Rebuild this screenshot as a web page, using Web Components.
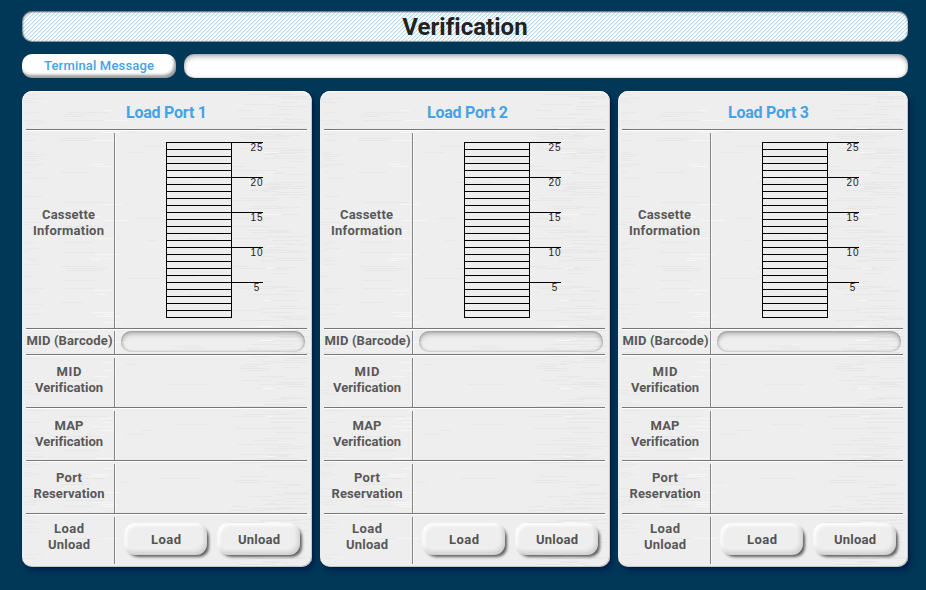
<!DOCTYPE html>
<html lang="en"><head><meta charset="utf-8"><title>Verification</title>
<style>html,body{margin:0;height:100%}body{background:#013757;overflow:hidden;font-family:Roboto,"Liberation Sans",Arial,sans-serif}</style></head>
<body><verification-screen></verification-screen>
<script>
// A line of text whose tracking is adjusted to a given width.
class FitText extends HTMLElement{
  connectedCallback(){
    if(this.shadowRoot)return;
    const r=this.attachShadow({mode:'open'});
    r.innerHTML='<style>:host{display:block;white-space:nowrap;text-align:center}span{display:inline-block}</style><span></span>';
    const s=r.querySelector('span'),t=this.getAttribute('text');s.textContent=t;
    const w=+this.getAttribute('width');
    if(w&&t.length>1){const d=(w-s.getBoundingClientRect().width)/(t.length-1);s.style.letterSpacing=d+'px';s.style.marginRight=-d+'px';}
  }
}
customElements.define('fit-text',FitText);

class BrushedMetal extends HTMLElement{
  connectedCallback(){
    const r=this.attachShadow({mode:'open'});
    let seed=7;const rnd=()=>(seed=(seed*16807)%2147483647)/2147483647;
    let out='';
    const streak=(x,y,w,c,o)=>out+=`<rect x="${x|0}" y="${y|0}" width="${Math.max(1,w|0)}" height="1" fill="${c}" opacity="${o}"/>`;
    for(let y=3;y<474;y+=2){
      if(rnd()<.4)streak(1+rnd()*5,y,6+rnd()*16,'#dcdcdc',.35);
      if(rnd()<.16)streak(38+rnd()*8,y,20+rnd()*26,'#dedede',.45);
      if(rnd()<.16)streak(68+rnd()*16,y,8+rnd()*18,'#fff',.45);
      if(rnd()<.6){const x=205+rnd()*60;streak(x,y,Math.min(287-x,14+rnd()*45),'#dedede',.45);}
      if(rnd()<.3)streak(240+rnd()*30,y+1,8+rnd()*18,'#dcdcdc',.35);
      if(rnd()<.1)streak(95+rnd()*75,y,8+rnd()*32,'#e0e0e0',.45);
      if(rnd()<.05)streak(235+rnd()*10,y,8+rnd()*10,'#fff',.6);
    }
    r.innerHTML=`<style>:host{display:block}svg{display:block}</style><svg width="290" height="476" shape-rendering="crispEdges">${out}</svg>`;
  }
}
customElements.define('brushed-metal',BrushedMetal);

class CassetteMap extends HTMLElement{
  connectedCallback(){
    const r=this.attachShadow({mode:'open'});
    r.innerHTML=`<style>
    :host{display:flex;color:#222;font:10px "Liberation Sans",Arial,sans-serif}
    .slots{box-sizing:border-box;width:66px;height:176px;border:1px solid #000;border-top:0;background:repeating-linear-gradient(#000 0 1px,transparent 1px 7px)}
    .scale{width:31px}
    .tick{box-sizing:border-box;height:35px;border-top:1px solid #000;padding:0 0 0 18px;line-height:9px}
    </style><div class="slots"></div><div class="scale">${[25,20,15,10,5].map(n=>`<div class="tick"><fit-text text="${n}" width="12"></fit-text></div>`).join('')}</div>`;
  }
}
customElements.define('cassette-map',CassetteMap);

class InsetField extends HTMLElement{
  connectedCallback(){
    this.attachShadow({mode:'open'}).innerHTML=`<style>:host{display:block;box-sizing:border-box;border-radius:10px;box-shadow:inset 0 3px 5px #0004,inset 0 0 3px #0004}</style><slot></slot>`;
  }
}
customElements.define('inset-field',InsetField);

class PushButton extends HTMLElement{
  connectedCallback(){
    this.attachShadow({mode:'open'}).innerHTML=`<style>
    :host{display:block}
    button{display:block;width:100%;height:32px;margin:0;padding:1px 0 0;border:0;border-radius:11px;background:#eee;color:#535353;font:bold 13px Roboto,"Liberation Sans",Arial,sans-serif;
    box-shadow:3px 3px 3px -1px #0009,inset -2px -3px 4px #0002,inset 3px 3px 3px #fffc}
    fit-text{padding-left:1px}
    </style><button><fit-text text="${this.getAttribute('label')}" width="${this.getAttribute('text-width')}"></fit-text></button>`;
  }
}
customElements.define('push-button',PushButton);

class PortRow extends HTMLElement{
  connectedCallback(){
    const lines=this.getAttribute('lines').split('|').map(l=>l.split(':'));
    this.attachShadow({mode:'open'}).innerHTML=`<style>
    :host{display:grid;grid-template-columns:88px 1fr;box-sizing:border-box;border-top:1px solid #777;box-shadow:inset 0 1px #fff;padding-top:3px}
    .label{box-sizing:border-box;display:flex;flex-direction:column;justify-content:center;align-items:center;font:bold 13px/16px Roboto,"Liberation Sans",Arial,sans-serif;color:#585858;padding-right:var(--inset,2px);padding-bottom:var(--lift,0px)}
    .cell{box-sizing:border-box;border-left:1px solid #858585;box-shadow:inset 1px 0 #fff9;min-width:0}
    </style><div class="label">${lines.map(([t,w])=>`<fit-text text="${t}" width="${w}"></fit-text>`).join('')}</div><div class="cell"><slot></slot></div>`;
  }
}
customElements.define('port-row',PortRow);

class LoadPort extends HTMLElement{
  connectedCallback(){
    const n=+this.getAttribute('number');
    this.attachShadow({mode:'open'}).innerHTML=`<style>
    :host{display:grid;width:290px;height:476px;border-radius:10px;background:#eee;box-shadow:inset 0 1px #fff,inset -1px -1px #8886,3px 4px 5px #00204dcc,1px 1px 2px #0008}
    brushed-metal,.content{grid-area:1/1}
    brushed-metal{overflow:hidden;border-radius:10px}
    .content{display:grid;grid-template-rows:38px 199px 26px 53px 53px 53px 51px;padding:0 5px 3px 4px;position:relative}
    h2{margin:0;padding:6px 0 0 ${(n-1)*6}px;font:bold 16px/32px Roboto,"Liberation Sans",Arial,sans-serif;color:#45a3e5}
    .cassette{--lift:16px;--inset:3px}
    .mid{--lift:4px;--inset:1px}.v1{--lift:6px}.v2{--lift:3px}.v3{--lift:5px}.load{--lift:7px}
    cassette-map{padding:9px 0 0 51px}
    .mid{padding-top:2px}
    inset-field{height:21px;margin:0 2px 0 6px}
    .buttons{display:grid;grid-template-columns:83px 83px;gap:10px;padding:6px 0 0 9px}
    </style><brushed-metal></brushed-metal><div class="content">
    <h2><fit-text text="Load Port ${n}" width="81"></fit-text></h2>
    <port-row class="cassette" lines="Cassette:53|Information:71"><cassette-map></cassette-map></port-row>
    <port-row class="mid" lines="MID (Barcode):86"><inset-field></inset-field></port-row>
    <port-row class="v1" lines="MID:25|Verification:68"></port-row>
    <port-row class="v2" lines="MAP:29|Verification:68"></port-row>
    <port-row class="v3" lines="Port:26|Reservation:71"></port-row>
    <port-row class="load" lines="Load:30|Unload:42"><div class="buttons"><push-button label="Load" text-width="30"></push-button><push-button label="Unload" text-width="42"></push-button></div></port-row>
    </div>`;
  }
}
customElements.define('load-port',LoadPort);

class VerificationScreen extends HTMLElement{
  connectedCallback(){
    this.attachShadow({mode:'open'}).innerHTML=`<style>
    :host{display:block;box-sizing:border-box;width:926px;height:590px;padding:11px 18px 0 22px}
    header{height:31px;border-radius:10px;font:bold 24px/31px Roboto,"Liberation Sans",Arial,sans-serif;color:#222;overflow:hidden;
      background:linear-gradient(135deg,#fff 0 19%,#b5daf0 19% 31%,#e3f2fb 31% 44%,#fff 44% 69%,#b5daf0 69% 81%,#e3f2fb 81% 94%,#fff 94%) 0 0/4px 4px;box-shadow:inset 0 1px 2px #0009,inset 0 -1px 1px #0005,inset 1px 0 2px #0005}
    h1{font:inherit;margin:0;padding-top:1px}
    .message{display:grid;grid-template-columns:154px 724px;gap:8px;margin:12px 0 13px}
    .tag{height:24px;border-radius:10px;background:#fff;box-shadow:inset -2px -3px 3px #0006;color:#45a3e5;font:500 13px/23px Roboto,"Liberation Sans",Arial,sans-serif}
    .message inset-field{height:24px;background:#fff}
    .ports{display:grid;grid-template-columns:repeat(3,290px);gap:8px}
    </style>
    <header><h1><fit-text text="Verification" width="125"></fit-text></h1></header>
    <div class="message"><div class="tag"><fit-text text="Terminal Message" width="110"></fit-text></div><inset-field></inset-field></div>
    <div class="ports"><load-port number="1"></load-port><load-port number="2"></load-port><load-port number="3"></load-port></div>`;
  }
}
customElements.define('verification-screen',VerificationScreen);
</script></body></html>
